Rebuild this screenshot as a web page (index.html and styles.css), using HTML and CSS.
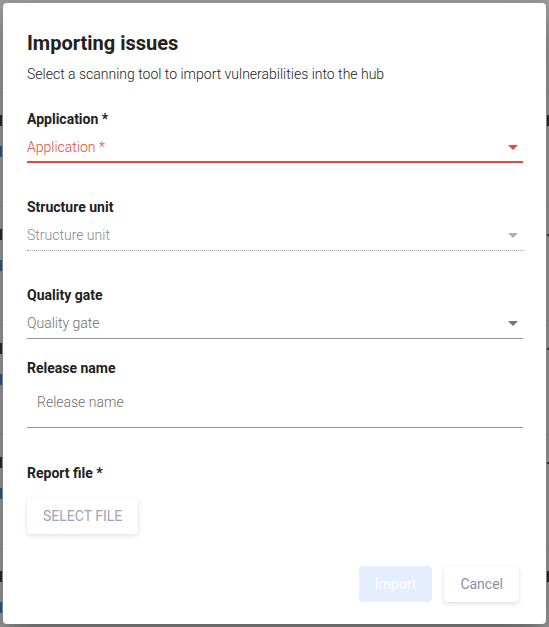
FILE: index.html
```html
<!DOCTYPE html>
<html lang="en">
<head>
<meta charset="utf-8">
<title>Importing issues</title>
<link rel="stylesheet" href="styles.css">
</head>
<body>
<div class="page">
  <div class="row row-first"></div>
  <div class="row"><div class="cell"><span class="frag dark"></span><span class="frag link"></span></div><div class="cell right"><span class="frag dark"></span></div></div>
  <div class="row"><div class="cell"><span class="frag dark"></span><span class="frag link"></span></div><div class="cell right"><span class="frag dot"></span></div></div>
  <div class="row"><div class="cell"><span class="frag dark"></span><span class="frag link"></span></div><div class="cell right"><span class="frag dot"></span></div></div>
  <div class="row"><div class="cell"><span class="frag dark"></span><span class="frag link"></span></div><div class="cell right"><span class="frag dot"></span></div></div>
  <div class="row row-last"><div class="cell"><span class="frag dark"></span><span class="frag link"></span></div><div class="cell right"><span class="frag dark"></span></div></div>
</div>

<div class="dialog">
  <h1 class="title">Importing issues</h1>
  <p class="subtitle">Select a scanning tool to import vulnerabilities into the hub</p>

  <div class="field field-gap">
    <div class="label">Application *</div>
    <div class="select select-error">
      <span class="value">Application *</span>
      <svg class="arrow" width="10" height="5" viewBox="0 0 10 5"><path d="M0 0h10L5 5z"/></svg>
    </div>
  </div>

  <div class="field field-gap">
    <div class="label">Structure unit</div>
    <div class="select select-disabled">
      <span class="value">Structure unit</span>
      <svg class="arrow" width="10" height="5" viewBox="0 0 10 5"><path d="M0 0h10L5 5z"/></svg>
    </div>
  </div>

  <div class="field field-gap-small">
    <div class="label">Quality gate</div>
    <div class="select">
      <span class="value">Quality gate</span>
      <svg class="arrow" width="10" height="5" viewBox="0 0 10 5"><path d="M0 0h10L5 5z"/></svg>
    </div>
  </div>

  <div class="field field-gap-release">
    <div class="label">Release name</div>
    <div class="input"><span class="value">Release name</span></div>
  </div>

  <div class="field">
    <div class="label">Report file *</div>
    <div class="file-row"><button class="btn btn-outline">SELECT FILE</button></div>
  </div>

  <div class="footer">
    <button class="btn btn-primary">Import</button>
    <button class="btn btn-outline btn-cancel">Cancel</button>
  </div>
</div>
</body>
</html>
```

FILE: styles.css
```css
* { box-sizing: border-box; }

html, body {
  margin: 0;
  padding: 0;
}

body {
  width: 549px;
  height: 627px;
  overflow: hidden;
  background: #9d9d9d;
  font-family: Roboto, "Liberation Sans", Arial, sans-serif;
  position: relative;
}

/* underlying page, dimmed by the overlay */
.page {
  display: flex;
  flex-direction: column;
  height: 627px;
  overflow: hidden;
}

.row {
  height: 114px;
  flex-shrink: 0;
  border-bottom: 1px solid #8f8f8f;
  display: flex;
  justify-content: space-between;
}

.row-first { height: 93px; }
.row-last { height: 78px; border-bottom: none; }

.cell {
  display: flex;
  flex-direction: column;
  padding-top: 22px;
  gap: 20px;
}

.cell.right { align-items: flex-end; }

.frag {
  display: block;
  width: 2px;
  height: 11px;
}

.frag.dark { background: #2e2e2e; }
.frag.link { background: #2a5d95; }
.frag.dot { width: 2px; height: 2px; margin-top: 5px; background: #3a3a3a; }

/* dialog */
.dialog {
  position: absolute;
  left: 3px;
  top: 3px;
  width: 543px;
  height: 621px;
  background: #ffffff;
  border-radius: 4px;
  box-shadow: 0 11px 15px -7px rgba(0,0,0,0.2), 0 24px 38px 3px rgba(0,0,0,0.14), 0 9px 46px 8px rgba(0,0,0,0.12);
  padding: 28px 23px 0 24px;
  display: flex;
  flex-direction: column;
}

.title {
  margin: 0;
  font-size: 20px;
  line-height: 24px;
  font-weight: 700;
  color: #212121;
}

.subtitle {
  margin: 9px 0 0;
  font-size: 14px;
  line-height: 20px;
  font-weight: 300;
  color: #222222;
}

.field {
  display: flex;
  flex-direction: column;
}

.subtitle + .field { margin-top: 25px; }

.field-gap { margin-bottom: 34px; }
.field-gap-small { margin-bottom: 19px; }
.field-gap-release { margin-bottom: 35px; }

.label {
  font-size: 14px;
  line-height: 20px;
  font-weight: 700;
  color: #212121;
}

.select {
  display: flex;
  align-items: center;
  justify-content: space-between;
  padding: 8px 5px 5px 0;
  border-bottom: 1px solid #949494;
  font-size: 14px;
  line-height: 20px;
  font-weight: 300;
  color: #6f6f6f;
}

.select .arrow { fill: #757575; }

.select-error {
  color: #f44336;
  border-bottom: 2px solid #f44336;
  padding-bottom: 4px;
}

.select-error .arrow { fill: #f44336; }

.select-disabled {
  border-bottom: 1px dotted #9e9e9e;
  color: #8a8a8a;
}

.select-disabled .arrow { fill: #b0b0b0; }

.input {
  padding: 14px 10px 15px;
  border-bottom: 1px solid #949494;
  font-size: 14px;
  line-height: 20px;
  font-weight: 300;
  color: #6f6f6f;
}

.file-row {
  margin-top: 15px;
  display: flex;
}

.btn {
  height: 36px;
  padding: 0 16px;
  border: none;
  border-radius: 4px;
  font-family: Roboto, "Liberation Sans", Arial, sans-serif;
  font-size: 14px;
  font-weight: 400;
  line-height: 36px;
  background: #ffffff;
  cursor: pointer;
}

.btn-outline {
  color: #a2a2bc;
  box-shadow: 0 2px 5px rgba(40, 40, 80, 0.13), 0 0 2px rgba(40, 40, 80, 0.06);
}

.btn-cancel { color: #8e8ea6; }

.btn-primary {
  background: #e4eeff;
  color: #ffffff;
}

.footer {
  margin-top: 32px;
  display: flex;
  justify-content: flex-end;
  gap: 12px;
  padding-right: 4px;
}
```
